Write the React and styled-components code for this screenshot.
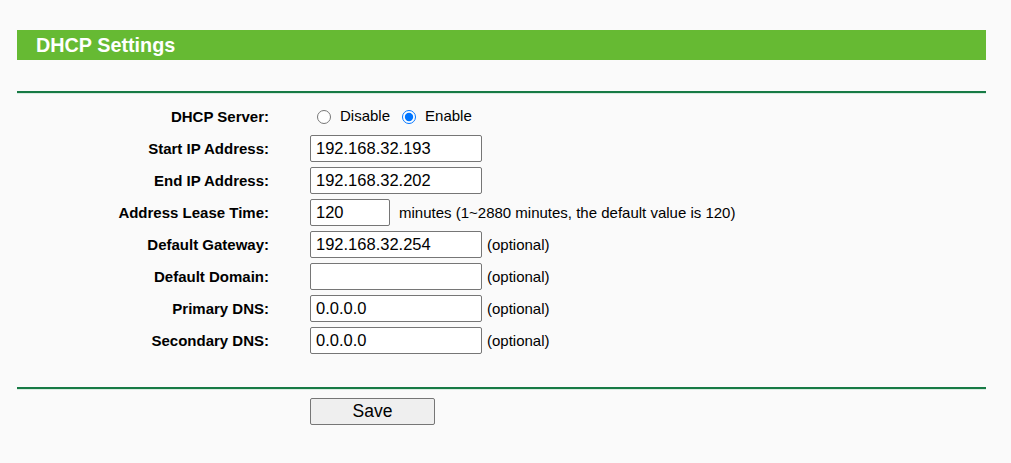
import React from "react";
import styled, { createGlobalStyle } from "styled-components";

const Global = createGlobalStyle`
  html, body { margin: 0; padding: 0; background: #fafafa; }
  body { font-family: "Liberation Sans", Arial, sans-serif; color: #000; }
`;

const Page = styled.div`
  padding: 30px 25px 0 17px;
`;

const TitleBar = styled.div`
  height: 30px;
  background: #66ba33;
  display: flex;
  align-items: center;
  padding-left: 19px;
  color: #fff;
  font-size: 19.8px;
  font-weight: bold;
`;

const Rule = styled.div`
  height: 2px;
  background: #177a45;
  border-bottom: 1px solid #d8ebe0;
  margin-top: ${(p) => p.$top}px;
`;

const Form = styled.div`
  display: grid;
  grid-template-columns: 252px 1fr;
  column-gap: 41px;
  row-gap: 5px;
  padding-top: 8px;
  align-items: center;
`;

const Label = styled.div`
  text-align: right;
  font-size: 15px;
  font-weight: bold;
  height: 27px;
  line-height: 27px;
`;

const Field = styled.div`
  display: flex;
  align-items: center;
  height: ${(p) => (p.$first ? 28 : 27)}px;
  font-size: 15px;
`;

const RadioLabel = styled.label`
  display: inline-flex;
  align-items: center;
  font-size: 15px;
  margin-right: 5px;
  margin-top: -2px;
  input {
    width: 14px;
    height: 14px;
    margin: 3px 9px 0 7px;
  }
`;

const TextInput = styled.input`
  box-sizing: border-box;
  width: ${(p) => p.$w}px;
  height: 27px;
  border: 1px solid #767676;
  border-radius: 2px;
  background: #fff;
  font-family: "Liberation Sans", Arial, sans-serif;
  font-size: 16.5px;
  padding: 0 5px;
  margin: 0;
  color: #000;
`;

const Hint = styled.span`
  margin-left: ${(p) => p.$ml}px;
  font-size: 15px;
`;

const Actions = styled.div`
  padding: 8px 0 0 293px;
`;

const SaveButton = styled.button`
  width: 125px;
  height: 27px;
  border: 1px solid #767676;
  border-radius: 2px;
  background: #efefef;
  font-family: "Liberation Sans", Arial, sans-serif;
  font-size: 17.5px;
  color: #000;
`;

const rows = [
  ["Start IP Address:", "192.168.32.193", 172, null],
  ["End IP Address:", "192.168.32.202", 172, null],
  ["Address Lease Time:", "120", 80, "minutes (1~2880 minutes, the default value is 120)"],
  ["Default Gateway:", "192.168.32.254", 172, "(optional)"],
  ["Default Domain:", "", 172, "(optional)"],
  ["Primary DNS:", "0.0.0.0", 172, "(optional)"],
  ["Secondary DNS:", "0.0.0.0", 172, "(optional)"],
];

export default function App() {
  return (
    <>
      <Global />
      <Page>
        <TitleBar>DHCP Settings</TitleBar>
        <Rule $top={31} />
        <Form>
          <Label>DHCP Server:</Label>
          <Field $first>
            <RadioLabel>
              <input type="radio" name="dhcp" />
              Disable
            </RadioLabel>
            <RadioLabel>
              <input type="radio" name="dhcp" defaultChecked />
              Enable
            </RadioLabel>
          </Field>
          {rows.map(([label, value, w, hint]) => (
            <React.Fragment key={label}>
              <Label>{label}</Label>
              <Field>
                <TextInput $w={w} defaultValue={value} />
                {hint && <Hint $ml={w === 80 ? 9 : 5}>{hint}</Hint>}
              </Field>
            </React.Fragment>
          ))}
        </Form>
        <Rule $top={33} />
        <Actions>
          <SaveButton>Save</SaveButton>
        </Actions>
      </Page>
    </>
  );
}
